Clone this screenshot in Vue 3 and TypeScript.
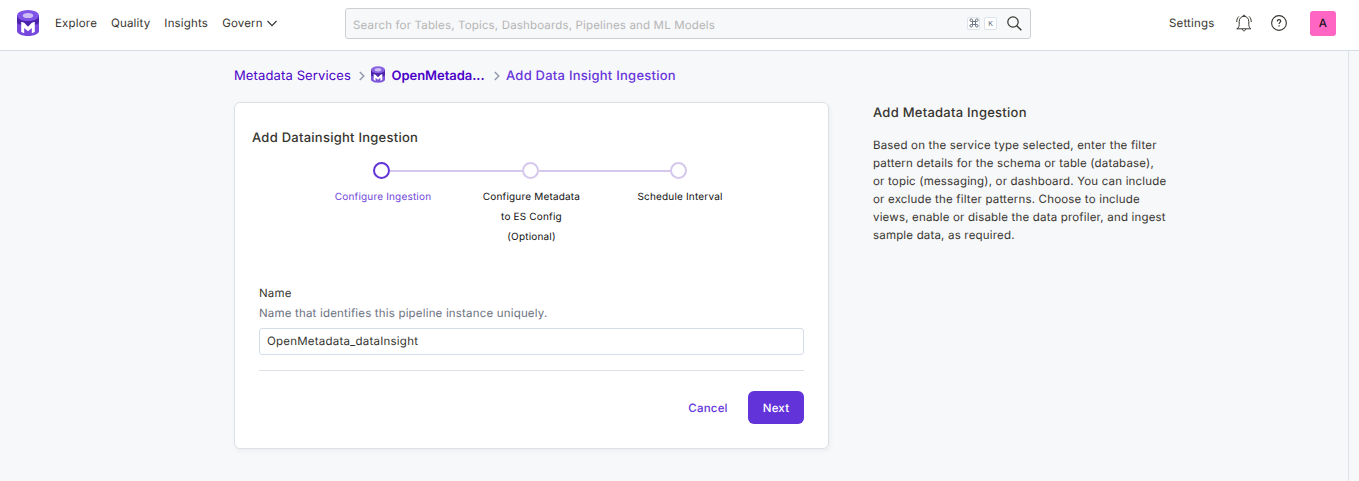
<script setup lang="ts">
import { ref } from 'vue'

interface Step {
  lines: string[]
  active: boolean
}

const navItems: string[] = ['Explore', 'Quality', 'Insights']
const steps: Step[] = [
  { lines: ['Configure Ingestion'], active: true },
  { lines: ['Configure Metadata', 'to ES Config', '(Optional)'], active: false },
  { lines: ['Schedule Interval'], active: false },
]
const helpLines: string[] = [
  'Based on the service type selected, enter the filter',
  'pattern details for the schema or table (database),',
  'or topic (messaging), or dashboard. You can include',
  'or exclude the filter patterns. Choose to include',
  'views, enable or disable the data profiler, and ingest',
  'sample data, as required.',
]
const name = ref('OpenMetadata_dataInsight')
const search = ref('')
</script>

<template>
  <div class="app">
    <header class="header">
      <svg class="logo" viewBox="0 0 22 26">
        <path d="M0 5v16c0 2.800 5 5 11 5s11-2.200 11-5V5z" fill="#7547dc" />
        <path d="M0 5v8c2 1.500 6 3 11 3s9-1.500 11-3V5z" fill="#4a22ab" />
        <ellipse cx="11" cy="5.500" rx="11" ry="5.500" fill="#7f53e6" />
        <ellipse cx="11" cy="5.500" rx="5.200" ry="2.600" fill="#cdbcf5" />
        <path d="M4.200 11.700l3 1.100 3.800 3.900 3.800-3.900 3-1.100v10.300l-3 1.200v-5.100L11 21.300l-3.800-3.200v5.100l-3-1.200z" fill="#fff" />
      </svg>
      <nav class="nav">
        <a v-for="item in navItems" :key="item">{{ item }}</a>
        <a class="govern">Govern
          <svg class="caret" viewBox="0 0 10 7"><path d="M.5 1l4.500 4.600L9.500 1" fill="none" stroke="#37352f" stroke-width="1.200" /></svg>
        </a>
      </nav>
      <div class="search">
        <input v-model="search" placeholder="Search for Tables, Topics, Dashboards, Pipelines and ML Models" />
        <span class="key">
          <svg viewBox="0 0 10 10" width="10" height="10"><path d="M3.500 3.500h3v3h-3zM3.500 3.500H2.200A1.300 1.300 0 1 1 3.500 2.200zM6.500 3.500V2.200a1.300 1.300 0 1 1 1.300 1.300zM6.500 6.500h1.300a1.300 1.300 0 1 1-1.300 1.300zM3.500 6.500v1.300a1.300 1.300 0 1 1-1.300-1.300z" fill="none" stroke="#5d6878" stroke-width=".9" /></svg>
        </span>
        <span class="key">K</span>
        <svg class="glass" viewBox="0 0 15 15"><circle cx="6" cy="6" r="5.200" fill="none" stroke="#37352f" stroke-width="1.200" /><path d="M9.700 9.700l4.700 4.500" stroke="#37352f" stroke-width="1.400" /></svg>
      </div>
      <a class="settings">Settings</a>
      <svg class="bell" viewBox="0 0 16 18" fill="none" stroke="#37352f" stroke-width="1" stroke-linecap="round" stroke-linejoin="round">
        <path d="M1.200 14.800h13.600c-1.500-1.300-2-2.400-2-4.500V7.500C12.800 4.500 10.800 2.300 8 2.300S3.200 4.500 3.200 7.500v2.800c0 2.100-.5 3.200-2 4.500z" />
        <path d="M6.900 2.200a1.100 1.100 0 1 1 2.200 0M6.300 15.200c.2 2.300 3.200 2.300 3.400 0M2.600 2.700C1.400 3.900.8 5.500.7 7.600M13.400 2.700c1.200 1.200 1.800 2.800 1.900 4.900" />
      </svg>
      <svg class="help" viewBox="0 0 16 16" fill="none" stroke="#37352f">
        <circle cx="8" cy="8" r="7.400" stroke-width="1.100" />
        <path d="M6.300 6.400c0-1.100.7-1.700 1.700-1.700s1.700.6 1.700 1.500c0 1.200-1.600 1.300-1.600 2.800M8.100 10.200v1.200" stroke-width="1.200" />
      </svg>
      <span class="avatar">A</span>
    </header>

    <main class="page">
      <section class="content">
        <div class="crumbs">
          <a class="c1">Metadata Services</a>
          <svg class="chev" viewBox="0 0 6 10"><path d="M.8 1l4 4-4 4" fill="none" stroke="#8f98a8" stroke-width="1.400" /></svg>
          <svg class="mini" viewBox="0 0 22 26">
            <path d="M0 5v16c0 2.800 5 5 11 5s11-2.200 11-5V5z" fill="#7c55d8" />
            <path d="M0 5v9c2 1.500 6 3 11 3s9-1.500 11-3V5z" fill="#4a22ab" />
            <ellipse cx="11" cy="5.500" rx="11" ry="5.500" fill="#8a63e3" />
            <ellipse cx="11" cy="5.500" rx="5.200" ry="2.600" fill="#cdbcf5" />
            <path d="M4.200 12.200l3 1.100 3.800 3.900 3.800-3.900 3-1.100v9.300l-3 1.200v-4.600L11 21.300l-3.800-3.200v4.600l-3-1.200z" fill="#fff" />
          </svg>
          <a class="c2">OpenMetada...</a>
          <svg class="chev" viewBox="0 0 6 10"><path d="M.8 1l4 4-4 4" fill="none" stroke="#8f98a8" stroke-width="1.400" /></svg>
          <a class="c3">Add Data Insight Ingestion</a>
        </div>

        <div class="card">
          <h1>Add Datainsight Ingestion</h1>
          <div class="steps">
            <div v-for="step in steps" :key="step.lines[0]" class="step" :class="{ active: step.active }">
              <span class="dot"></span>
              <div class="label">
                <div v-for="line in step.lines" :key="line">{{ line }}</div>
              </div>
            </div>
          </div>
          <form class="form" @submit.prevent>
            <label for="name">Name</label>
            <p>Name that identifies this pipeline instance uniquely.</p>
            <input id="name" v-model="name" />
            <hr />
            <div class="actions">
              <button class="cancel" type="button">Cancel</button>
              <button class="next" type="submit">Next</button>
            </div>
          </form>
        </div>
      </section>
      <aside class="aside">
        <h2>Add Metadata Ingestion</h2>
        <div v-for="line in helpLines" :key="line" class="para">{{ line }}</div>
      </aside>
      <div class="rail"></div>
    </main>
  </div>
</template>

<style>
body {
  background: #f7f8fa;
  overflow: hidden;
}
</style>

<style scoped>
.app {
  height: 481px;
  display: flex;
  flex-direction: column;
  font-family: Inter, "Liberation Sans", sans-serif;
  font-size: 11.500px;
  letter-spacing: 0.180px;
  text-rendering: geometricPrecision;
  color: #37352f;
  box-sizing: border-box;
}
.app * {
  box-sizing: border-box;
}
.header {
  height: 51px;
  flex: none;
  display: flex;
  align-items: center;
  padding: 0 23px 4px 17px;
  background: #fff;
  border-bottom: 1px solid #d5dde8;
}
.logo {
  width: 22px;
  height: 26px;
  flex: none;
}
.nav {
  display: flex;
  gap: 14px;
  width: 289px;
  margin-left: 16px;
  padding-bottom: 1px;
  white-space: nowrap;
}
.govern {
  display: flex;
  align-items: center;
  gap: 4px;
}
.caret {
  width: 10px;
  height: 7px;
  margin-top: 1px;
}
.search {
  width: 686px;
  height: 31px;
  margin: 0 138px 0 1px;
  display: flex;
  flex: none;
  align-items: center;
  padding: 0 8px 0 7px;
  border: 1px solid #cfcfcf;
  border-radius: 3px;
  background: #f7f8fa;
}
.search input {
  flex: 1;
  padding: 3px 0 0;
  border: 0;
  outline: 0;
  background: none;
  font: inherit;
  letter-spacing: 0.160px;
  text-rendering: inherit;
}
.search input::placeholder {
  color: #b5b5b5;
}
.key {
  width: 13px;
  height: 13px;
  margin-right: 4px;
  display: flex;
  align-items: center;
  justify-content: center;
  border: 1px solid #dde3ea;
  border-radius: 2px;
  background: #fff;
  color: #5d6878;
  font-size: 7px;
  letter-spacing: 0;
}
.glass {
  width: 15px;
  height: 15px;
  margin-left: 6px;
}
.settings {
  width: 66px;
  padding-bottom: 1px;
}
.bell {
  width: 16px;
  height: 18px;
  margin-left: 0.500px;
  flex: none;
}
.help {
  width: 16px;
  height: 16px;
  margin: 0 23px 0 19.500px;
  flex: none;
}
.avatar {
  width: 26px;
  height: 25px;
  flex: none;
  border-radius: 3px;
  background: #ff66c4;
  color: #111;
  font-weight: 500;
  line-height: 25px;
  text-align: center;
}
.page {
  flex: 1;
  display: flex;
}
.content {
  width: 595px;
  margin-left: 234px;
  padding-top: 14px;
}
.crumbs {
  height: 20px;
  display: flex;
  align-items: center;
  font-size: 13px;
  white-space: nowrap;
  color: #4a00c8;
}
.crumbs a {
  padding-top: 2px;
}
.c1 {
  width: 124.500px;
  letter-spacing: 0.130px;
}
.chev {
  width: 6px;
  height: 10px;
  margin-top: 2px;
  flex: none;
}
.mini {
  width: 14px;
  height: 17px;
  margin: 0 7px 2px 6px;
  flex: none;
}
.c2 {
  width: 102.500px;
  font-weight: 600;
  letter-spacing: -0.040px;
}
.c3 {
  margin-left: 6px;
  color: #6735dc;
  font-weight: 500;
  letter-spacing: 0.240px;
}
.card {
  height: 347px;
  margin-top: 17px;
  padding: 25px 24px 0;
  border: 1px solid #dde0e7;
  border-radius: 6px;
  background: #fff;
  box-shadow: 1px 2px 5px rgba(0, 0, 0, 0.05);
}
h1,
h2 {
  margin: 0;
  font-size: 13px;
  font-weight: 500;
  letter-spacing: 0.250px;
  line-height: 20px;
}
h1 {
  margin-left: -7px;
}
.steps {
  display: flex;
  justify-content: center;
  height: 130px;
  padding-top: 14px;
}
.step {
  width: 148.500px;
  display: flex;
  flex-direction: column;
  align-items: center;
  font-size: 10px;
  line-height: 20px;
  color: #111;
  text-align: center;
  white-space: nowrap;
}
.dot {
  width: 17px;
  height: 17px;
  margin-right: 3px;
  border: 2px solid #d5c8ec;
  border-radius: 50%;
  background: #fff;
}
.step:not(:last-child) .dot::after {
  content: "";
  display: block;
  width: 132px;
  height: 2px;
  margin: 5.500px 0 0 15px;
  background: #d5c8ec;
}
.active .dot {
  border-color: #6233d9;
}
.label {
  margin-top: 8px;
}
.active .label {
  color: #7046d9;
}
.form {
  display: flex;
  flex-direction: column;
}
.form label,
.form p {
  margin: 0;
  line-height: 20px;
}
.form label {
  margin-top: 5px;
}
.form p {
  color: #6b7280;
}
.form input {
  height: 27px;
  margin-top: 5px;
  padding: 0 7px 1px;
  border: 1px solid #d5dde8;
  border-radius: 3px;
  outline: 0;
  color: #37352f;
  font: inherit;
  letter-spacing: 0.220px;
  text-rendering: inherit;
}
.form hr {
  width: 100%;
  height: 1px;
  margin: 15px 0 20px;
  border: 0;
  background: #dde0e7;
}
.actions {
  display: flex;
  justify-content: flex-end;
}
button {
  height: 33px;
  padding: 0;
  border: 0;
  background: none;
  font: inherit;
  font-weight: 500;
  letter-spacing: 0.200px;
  text-rendering: inherit;
}
.cancel {
  width: 80px;
  color: #6233d9;
}
.next {
  width: 56px;
  border-radius: 6px;
  background: #6233d9;
  color: #fff;
}
.aside {
  width: 475px;
  padding: 52px 0 0 44px;
}
.aside h2 {
  margin-bottom: 13px;
}
.para {
  line-height: 18px;
  white-space: nowrap;
}
.rail {
  margin-left: 44px;
  flex: 1;
  border-left: 1px solid #dfe2e8;
}
</style>
